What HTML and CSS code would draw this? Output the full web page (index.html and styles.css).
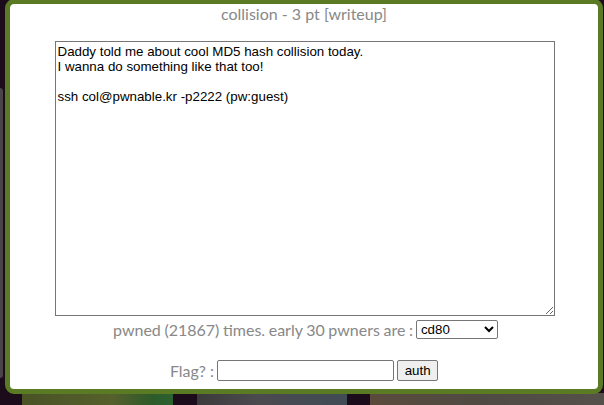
FILE: index.html
```html
<!DOCTYPE html>
<html>
<head>
<meta charset="utf-8">
<link rel="stylesheet" href="styles.css">
</head>
<body>
<div class="page">
  <div class="side-tab"></div>
  <div class="strip">
    <div class="tile dark w20"></div>
    <div class="tile olive"></div>
    <div class="tile dark w24"></div>
    <div class="tile blue"></div>
    <div class="tile dark w23"></div>
    <div class="tile brown"></div>
  </div>
</div>
<div class="modal">
  <div class="title">collision - 3 pt [writeup]</div>
  <textarea class="desc">Daddy told me about cool MD5 hash collision today.
I wanna do something like that too!

ssh col@pwnable.kr -p2222 (pw:guest)</textarea>
  <div class="row pwned">
    <span class="pwned-text">pwned (21867) times. early 30 pwners are :</span>
    <select class="pwners"><option>cd80</option></select>
  </div>
  <div class="row flag">
    <span>Flag? :</span>
    <input class="flag-input" type="text">
    <button class="auth">auth</button>
  </div>
</div>
</body>
</html>
```
FILE: styles.css
```css
html, body {
  margin: 0;
  padding: 0;
  width: 604px;
  height: 405px;
  overflow: hidden;
  background: #1c0c1b;
}
.page {
  width: 604px;
  height: 405px;
  display: flex;
  flex-direction: column;
  justify-content: flex-end;
}
.side-tab {
  position: absolute;
  left: 0;
  top: 88px;
  width: 3px;
  height: 290px;
  background: #4a4448;
  border-radius: 0 3px 3px 0;
}
.strip {
  display: flex;
  height: 12px;
}
.tile { height: 12px; }
.dark { background: #1c0c1b; }
.w20 { width: 22px; }
.w24 { width: 24px; }
.w23 { width: 23px; }
.olive { width: 151px; background: linear-gradient(90deg, #4a5226 0%, #55602c 60%, #2f5a2a 85%, #2b6130 100%); }
.blue { width: 150px; background: linear-gradient(90deg, #3c3a3a 0%, #4b4a4f 40%, #3f4b55 100%); }
.brown { flex: 1; background: linear-gradient(90deg, #5a4a3c 0%, #4f4a44 50%, #55504a 100%); }

.modal {
  position: absolute;
  left: 5px;
  top: -1px;
  width: 588px;
  height: 385px;
  border: 5px solid #5a7a24;
  border-radius: 9px;
  background: #ffffff;
  display: flex;
  flex-direction: column;
  align-items: center;
  font-family: Lato, "Liberation Sans", sans-serif;
  color: #888888;
  font-size: 16px;
}
.title {
  height: 19px;
  line-height: 19px;
  margin-top: 0;
}
.desc {
  margin: 18px 0 0 1px;
  width: 500px;
  height: 275px;
  box-sizing: border-box;
  border: 1px solid #767676;
  padding: 2px;
  font-family: "Liberation Sans", Arial, sans-serif;
  font-size: 13.33px;
  line-height: 15px;
  color: #000;
  resize: both;
}
.row {
  display: flex;
  align-items: center;
  justify-content: center;
  gap: 3px;
}
.pwned {
  height: 27px;
  margin-left: 3px;
}
.pwned-text {
  word-spacing: -0.5px;
}
.pwners {
  width: 82px;
  height: 19px;
  font-family: "Liberation Sans", Arial, sans-serif;
  font-size: 13.33px;
  color: #000;
  border: 1px solid #767676;
  border-radius: 2px;
  background: #fff;
}
.flag {
  margin-top: 17px;
  height: 21px;
}
.flag-input {
  width: 177px;
  height: 21px;
  box-sizing: border-box;
  margin: 0;
  border: 1px solid #767676;
  border-radius: 2px;
  padding: 1px 2px;
  font-family: "Liberation Sans", Arial, sans-serif;
  font-size: 13.33px;
}
.auth {
  width: 41px;
  height: 21px;
  box-sizing: border-box;
  margin: 0;
  padding: 1px 6px;
  font-family: "Liberation Sans", Arial, sans-serif;
  font-size: 13.33px;
  color: #000;
  background: #efefef;
  border: 1px solid #767676;
  border-radius: 2px;
}
```
